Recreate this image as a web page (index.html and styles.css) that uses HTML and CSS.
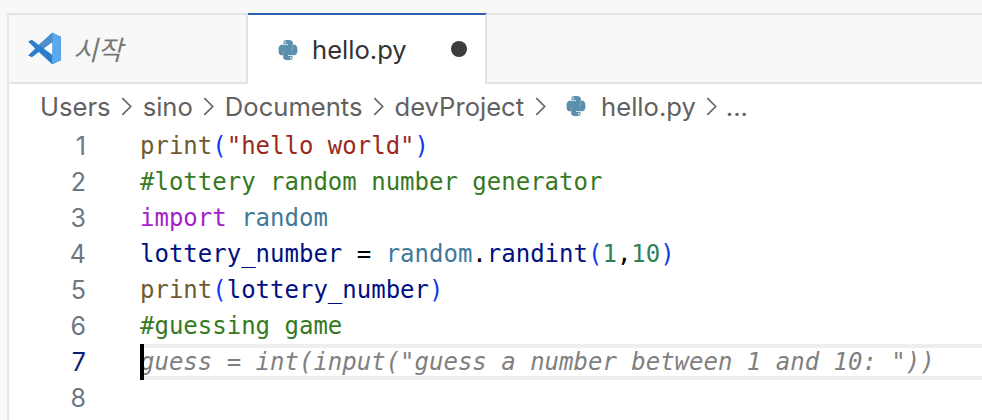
FILE: index.html
```html
<!DOCTYPE html>
<html lang="ko">
<head>
<meta charset="utf-8">
<title>hello.py</title>
<link rel="stylesheet" href="styles.css">
</head>
<body>
<svg class="defs" width="0" height="0" aria-hidden="true">
  <symbol id="py" viewBox="0 0 24 24">
    <path fill="#5b8fae" d="M11.8 1C6.900 1 7.200 3.100 7.200 3.100v2.300h4.800v.8H5.100S1.700 5.800 1.700 11.900s3 5.900 3 5.900h1.900v-2.800s-.1-3 3-3h4.900s2.800 0 2.800-2.700V3.800S17.700 1 11.800 1zM9.100 2.600a.9.9 0 1 1 0 1.800.9.9 0 0 1 0-1.800z"/>
    <path fill="#5b8fae" d="M12.200 23c4.900 0 4.600-2.100 4.600-2.100v-2.300H12v-.8h6.900s3.400.4 3.400-5.700-3-5.900-3-5.900h-1.900V9s.1 3-3 3H9.500s-2.800 0-2.800 2.700v5.500S6.300 23 12.200 23zm2.700-1.600a.9.9 0 1 1 0-1.800.9.9 0 0 1 0 1.800z"/>
  </symbol>
</svg>
<div class="window">
  <div class="tabs">
    <div class="tab tab-start">
      <svg class="vs" viewBox="0 0 32 32" aria-hidden="true">
        <path fill="#2b7ec9" d="M23 1.500 31 5.300v21.400L23 30.500 10.800 19.300 4.500 24 1 22.300 7.500 16 1 9.700 4.500 8l6.300 4.700z"/>
        <path fill="#5aa9ee" d="M23 1.500 31 5.300v21.400L23 30.500z"/>
        <path fill="#4e8fc9" d="M23 1.500v8.700L15 16 10.800 12.700z"/>
        <path fill="#fff" d="M23 10.200V21.800L15.400 16z"/>
      </svg>
      <span class="start-label">시작</span>
    </div>
    <div class="tab tab-active">
      <svg class="py"><use href="#py"/></svg>
      <span class="name">hello.py</span>
      <span class="dot"></span>
    </div>
    <div class="tab-fill"></div>
  </div>
  <nav class="crumbs">
    <span>Users</span><svg class="chev" viewBox="0 0 12 20"><path d="M2 2l8 8-8 8"/></svg>
    <span>sino</span><svg class="chev" viewBox="0 0 12 20"><path d="M2 2l8 8-8 8"/></svg>
    <span>Documents</span><svg class="chev" viewBox="0 0 12 20"><path d="M2 2l8 8-8 8"/></svg>
    <span>devProject</span><svg class="chev" viewBox="0 0 12 20"><path d="M2 2l8 8-8 8"/></svg>
    <svg class="py py-crumb"><use href="#py"/></svg>
    <span>hello.py</span><svg class="chev" viewBox="0 0 12 20"><path d="M2 2l8 8-8 8"/></svg>
    <span class="more">...</span>
  </nav>
  <div class="editor">
    <div class="line"><span class="num">1</span><code><span class="fn">print</span><span class="b1">(</span><span class="str">"hello world"</span><span class="b1">)</span></code></div>
    <div class="line"><span class="num">2</span><code class="cm">#lottery random number generator</code></div>
    <div class="line"><span class="num">3</span><code><span class="kw">import</span> <span class="mod">random</span></code></div>
    <div class="line"><span class="num">4</span><code><span class="var">lottery_number</span> = <span class="mod">random</span>.<span class="var">randint</span><span class="b1">(</span><span class="n">1</span>,<span class="n">10</span><span class="b1">)</span></code></div>
    <div class="line"><span class="num">5</span><code><span class="fn">print</span><span class="b1">(</span><span class="var">lottery_number</span><span class="b1">)</span></code></div>
    <div class="line"><span class="num">6</span><code class="cm">#guessing game</code></div>
    <div class="line current"><span class="num">7</span><code class="ghost"><span class="caret"></span>guess = int(input("guess a number between 1 and 10: "))</code></div>
    <div class="line"><span class="num">8</span><code></code></div>
  </div>
</div>
</body>
</html>
```
FILE: styles.css
```css
html, body { margin: 0; padding: 0; background: #f8f8f8; width: 982px; height: 420px; overflow: hidden; }
.defs { position: absolute; }
.window {
  margin: 13px 0 0 7px;
  height: 407px;
  background: #fff;
  border-top: 2px solid #e2e2e2;
  border-left: 2px solid #e8e8e8;
  font-family: "Inter", "Liberation Sans", sans-serif;
  box-sizing: border-box;
}
.tabs { display: flex; height: 69px; }
.tab { display: flex; align-items: center; box-sizing: border-box; }
.tab-start {
  width: 239px;
  padding-left: 18px;
  background: #f8f8f8;
  border-bottom: 2px solid #e2e2e2;
  border-right: 2px solid #e2e2e2;
}
.vs { width: 35px; height: 35px; flex: none; }
.start-label {
  margin-left: 11px;
  font: italic 27px "Noto Sans CJK KR", sans-serif;
  color: #777;
}
.tab-active {
  width: 239px;
  padding-left: 29px;
  background: #fff;
  border-top: 2px solid #2a5fb0;
  border-right: 2px solid #e2e2e2;
  margin-top: -2px;
  height: 71px;
}
.py { width: 22px; height: 22px; flex: none; }
.name { margin-left: 13px; font-size: 25.6px; color: #333; }
.dot { width: 16px; height: 16px; border-radius: 50%; background: #3c3c3c; margin-left: 44px; margin-top: -2px; }
.tab-fill { flex: 1; background: #f8f8f8; border-bottom: 2px solid #e2e2e2; }
.crumbs {
  display: flex;
  align-items: center;
  height: 44px;
  padding-left: 31px;
  font-size: 25.6px;
  color: #616161;
}
.chev { width: 13px; height: 21px; margin: 0 9.500px; fill: none; stroke: #616161; stroke-width: 1.5; flex: none; }
.py-crumb { margin: 0 14px 0 9px; }
.more { margin-left: -2px; }
.line { display: flex; height: 36px; align-items: center; position: relative; }
.num {
  width: 77px;
  text-align: right;
  font-size: 25px;
  color: #6e7681;
  flex: none;
}
code {
  margin-left: 55px;
  font: 24px/36px "DejaVu Sans Mono", monospace;
  white-space: pre;
  color: #000;
  position: relative;
  left: -1px;
}
.fn { color: #6f5a2f; }
.b1 { color: #0f3be8; }
.str { color: #9a2a20; }
.cm { color: #36791f; }
.kw { color: #a521c8; }
.mod { color: #40799a; }
.var { color: #001080; }
.n { color: #2f7f5c; }
.current .num { color: #0b216f; }
.current::after {
  content: "";
  position: absolute;
  left: 132px; right: 0; top: 0; bottom: 0;
  border-top: 4px solid #eee;
  border-bottom: 4px solid #eee;
  pointer-events: none;
}
.ghost { color: #808080; font-style: italic; }
.caret { position: absolute; left: 0; top: 0; width: 4px; height: 36px; background: #000; z-index: 1; }
```
